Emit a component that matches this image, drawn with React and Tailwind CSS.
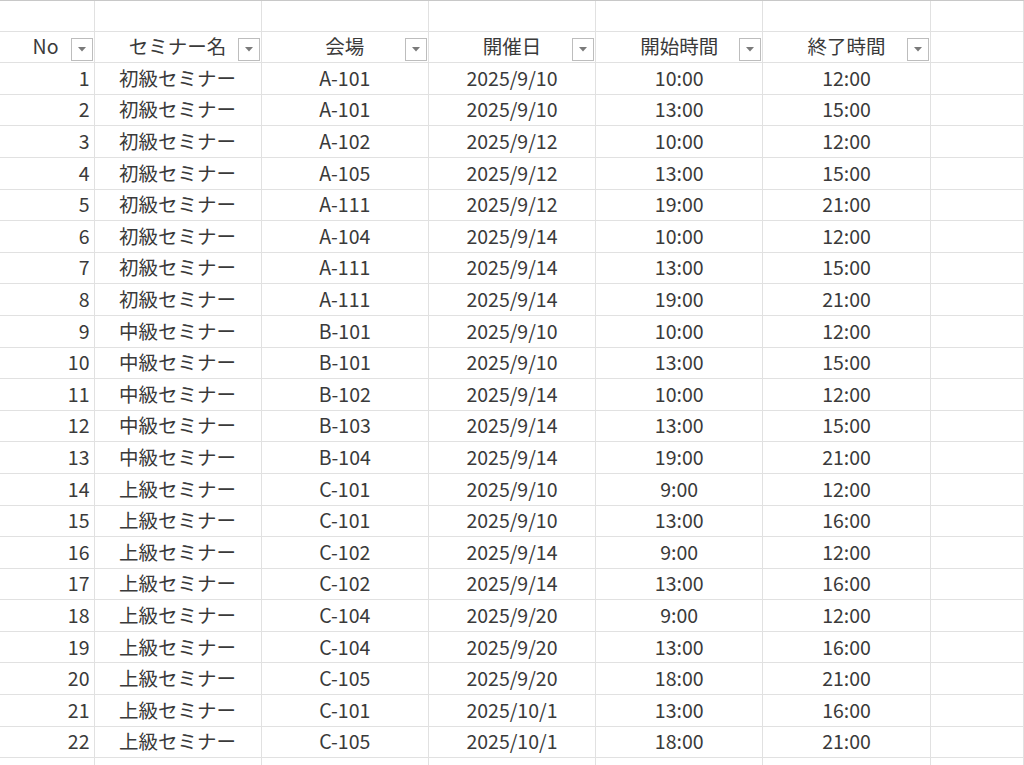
import React from "react";

const rows = [
  [1, "初級セミナー", "A-101", "2025/9/10", "10:00", "12:00"],
  [2, "初級セミナー", "A-101", "2025/9/10", "13:00", "15:00"],
  [3, "初級セミナー", "A-102", "2025/9/12", "10:00", "12:00"],
  [4, "初級セミナー", "A-105", "2025/9/12", "13:00", "15:00"],
  [5, "初級セミナー", "A-111", "2025/9/12", "19:00", "21:00"],
  [6, "初級セミナー", "A-104", "2025/9/14", "10:00", "12:00"],
  [7, "初級セミナー", "A-111", "2025/9/14", "13:00", "15:00"],
  [8, "初級セミナー", "A-111", "2025/9/14", "19:00", "21:00"],
  [9, "中級セミナー", "B-101", "2025/9/10", "10:00", "12:00"],
  [10, "中級セミナー", "B-101", "2025/9/10", "13:00", "15:00"],
  [11, "中級セミナー", "B-102", "2025/9/14", "10:00", "12:00"],
  [12, "中級セミナー", "B-103", "2025/9/14", "13:00", "15:00"],
  [13, "中級セミナー", "B-104", "2025/9/14", "19:00", "21:00"],
  [14, "上級セミナー", "C-101", "2025/9/10", "9:00", "12:00"],
  [15, "上級セミナー", "C-101", "2025/9/10", "13:00", "16:00"],
  [16, "上級セミナー", "C-102", "2025/9/14", "9:00", "12:00"],
  [17, "上級セミナー", "C-102", "2025/9/14", "13:00", "16:00"],
  [18, "上級セミナー", "C-104", "2025/9/20", "9:00", "12:00"],
  [19, "上級セミナー", "C-104", "2025/9/20", "13:00", "16:00"],
  [20, "上級セミナー", "C-105", "2025/9/20", "18:00", "21:00"],
  [21, "上級セミナー", "C-101", "2025/10/1", "13:00", "16:00"],
  [22, "上級セミナー", "C-105", "2025/10/1", "18:00", "21:00"],
];

const headers = ["セミナー名", "会場", "開催日", "開始時間", "終了時間"];

const cell = "relative h-[31.6px] pb-[2px] border-r border-b border-[#e1e1e1] flex items-center";

const FilterButton = () => (
  <span className="absolute right-[1px] bottom-[1px] w-[22px] h-[23px] bg-white border border-[#bdbdbd] flex items-center justify-center">
    <svg width="8" height="5" viewBox="0 0 8 5">
      <path d="M0 0 L8 0 L4 4.5 Z" fill="#7a7a7a" />
    </svg>
  </span>
);

const EmptyRow = () => (
  <>
    {Array.from({ length: 7 }).map((_, i) => (
      <div key={i} className={cell} />
    ))}
  </>
);

export default function App() {
  return (
    <div
      className="w-[1024px] h-[765px] overflow-hidden bg-white text-[#3a3a3a] text-[19.5px] border-t border-[#c8c8c8]"
      style={{ fontFamily: '"Noto Sans CJK JP", "Noto Sans", sans-serif' }}
    >
      <div className="grid grid-cols-[94.5px_167.2px_167.2px_167.2px_167.3px_167.3px_1fr]">
        {Array.from({ length: 7 }).map((_, i) => (
          <div key={i} className="h-[30.6px] border-r border-b border-[#e1e1e1]" />
        ))}

        <div className={`${cell} justify-end pr-[35px]`}>
          No
          <FilterButton />
        </div>
        {headers.map((h) => (
          <div key={h} className={`${cell} justify-center`}>
            {h}
            <FilterButton />
          </div>
        ))}
        <div className={cell} />

        {rows.map((r) => (
          <React.Fragment key={r[0]}>
            <div className={`${cell} justify-end pr-[4px]`}>{r[0]}</div>
            {r.slice(1).map((v, i) => (
              <div key={i} className={`${cell} justify-center`}>
                {v}
              </div>
            ))}
            <div className={cell} />
          </React.Fragment>
        ))}
        <EmptyRow />
      </div>
    </div>
  );
}
